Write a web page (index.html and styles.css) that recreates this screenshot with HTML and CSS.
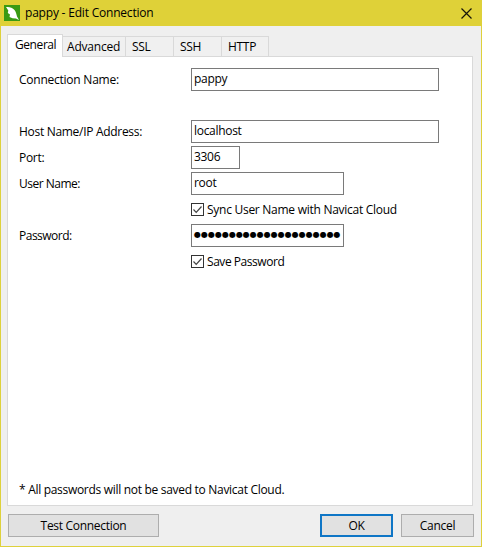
FILE: index.html
```html
<!DOCTYPE html>
<html lang="en">
<head>
<meta charset="utf-8">
<title>pappy - Edit Connection</title>
<link rel="stylesheet" href="styles.css">
</head>
<body>
<div class="window">
  <header class="titlebar">
    <svg class="logo" width="16" height="16" viewBox="0 0 16 16"><rect width="16" height="16" fill="#399a13"/><path d="M2 2C5 1.500 8.500 2.500 10.500 5C12 7 12.500 9.500 13 11.500L15 15L12 13.500L8.500 13.300L5.500 12L6 9.500L3.800 8L4.300 5.500Z" fill="#fff"/></svg>
    <h1 class="title">pappy - Edit Connection</h1>
    <svg class="close" width="11" height="11" viewBox="0 0 11 11"><path d="M.5.5l10 10M10.500.500l-10 10" stroke="#16150a" stroke-width="1.200"/></svg>
  </header>
  <nav class="tabs">
    <span class="tab general active">General</span><span class="tab advanced">Advanced</span><span class="tab ssl">SSL</span><span class="tab ssh">SSH</span><span class="tab http">HTTP</span>
  </nav>
  <main class="panel">
    <div class="row name"><span class="label t-name">Connection Name:</span><span class="field wide">pappy</span></div>
    <div class="row"><span class="label">Host Name/IP Address:</span><span class="field wide">localhost</span></div>
    <div class="row"><span class="label">Port:</span><span class="field port">3306</span></div>
    <div class="row"><span class="label t-user">User Name:</span><span class="field medium">root</span></div>
    <div class="row"><span class="label"></span><span class="check"><svg width="13" height="13" viewBox="0 0 13 13"><rect x=".5" y=".5" width="12" height="12" fill="#fff" stroke="#333"/><path d="M2.500 6.500l2.700 2.800 5.300-5.800" fill="none" stroke="#444" stroke-width="1.200"/></svg><span class="t-sync">Sync User Name with Navicat Cloud</span></span></div>
    <div class="row"><span class="label t-pass">Password:</span><span class="field medium password">●●●●●●●●●●●●●●●●●●●●●</span></div>
    <div class="row"><span class="label"></span><span class="check"><svg width="13" height="13" viewBox="0 0 13 13"><rect x=".5" y=".5" width="12" height="12" fill="#fff" stroke="#333"/><path d="M2.500 6.500l2.700 2.800 5.300-5.800" fill="none" stroke="#444" stroke-width="1.200"/></svg><span class="t-save">Save Password</span></span></div>
    <p class="note">* All passwords will not be saved to Navicat Cloud.</p>
  </main>
  <footer class="actions">
    <span class="button test">Test Connection</span>
    <span class="button ok">OK</span>
    <span class="button cancel">Cancel</span>
  </footer>
</div>
</body>
</html>
```
FILE: styles.css
```css
* { box-sizing: border-box; }
body {
  margin: 0;
  font: 12px/16px "Open Sans", "Noto Sans", sans-serif;
  letter-spacing: -0.3px;
  color: #000;
  white-space: nowrap;
}
.window {
  width: 482px;
  height: 547px;
  display: flex;
  flex-direction: column;
  background: #efefef;
  border: 1px solid #ded13b;
  border-top: 0;
}
.titlebar {
  height: 26px;
  flex: none;
  display: flex;
  align-items: center;
  padding: 0 9px 0 3px;
  background: #dfd138;
}
.title { margin: 0 auto 0 5px; font-size: 12px; font-weight: 400; letter-spacing: -0.2px; }
.tabs { display: flex; align-items: flex-end; height: 31px; margin: 0 0 -1px 6px; padding-bottom: 1px; flex: none; }
.tab {
  height: 20px;
  padding: 2px 0 0 6px;
  border: 1px solid #d9d9d9;
  border-width: 1px 1px 0 0;
  background: #f0f0f0;
}
.tab.active {
  height: 23px;
  margin-bottom: -1px;
  padding: 2px 0 0 7px;
  border-left-width: 1px;
  background: #fff;
  z-index: 1;
}
.general { width: 56px; letter-spacing: -0.42px; }
.advanced { width: 63px; padding-left: 4px; letter-spacing: -0.2px; }
.ssl { width: 48px; }
.ssh { width: 48px; }
.http { width: 47px; }
.panel {
  width: 466px;
  height: 450px;
  flex: none;
  margin-left: 6px;
  padding: 11px 0 0 11px;
  display: flex;
  flex-direction: column;
  gap: 3px;
  background: #fff;
  border: 1px solid #d9d9d9;
}
.row { display: flex; height: 23px; }
.row.name { margin-bottom: 26px; }
.label { width: 172px; padding-top: 4px; }
.field { height: 23px; padding: 2px 0 0 2px; border: 1px solid #7a7a7a; background: #fff; overflow: hidden; }
.wide { width: 248px; }
.medium { width: 153px; }
.port { width: 49px; }
.password { padding-top: 1px; font: 8px/18px "DejaVu Sans", sans-serif; letter-spacing: 0; }
.check { display: flex; align-items: center; gap: 3px; }
.t-name { letter-spacing: -0.24px; }
.t-user { letter-spacing: -0.5px; }
.t-pass { letter-spacing: -0.5px; }
.t-sync { letter-spacing: -0.27px; }
.t-save { letter-spacing: -0.45px; }
.note { margin: auto 0 7px; }
.actions { display: flex; gap: 8px; padding: 8px 7px 0; }
.button {
  height: 23px;
  padding-top: 3px;
  text-align: center;
  background: #e1e1e1;
  border: 1px solid #adadad;
}
.test { width: 151px; margin-right: auto; }
.ok { width: 73px; padding-top: 2px; border: 2px solid #0f76c6; }
.cancel { width: 73px; }
```
